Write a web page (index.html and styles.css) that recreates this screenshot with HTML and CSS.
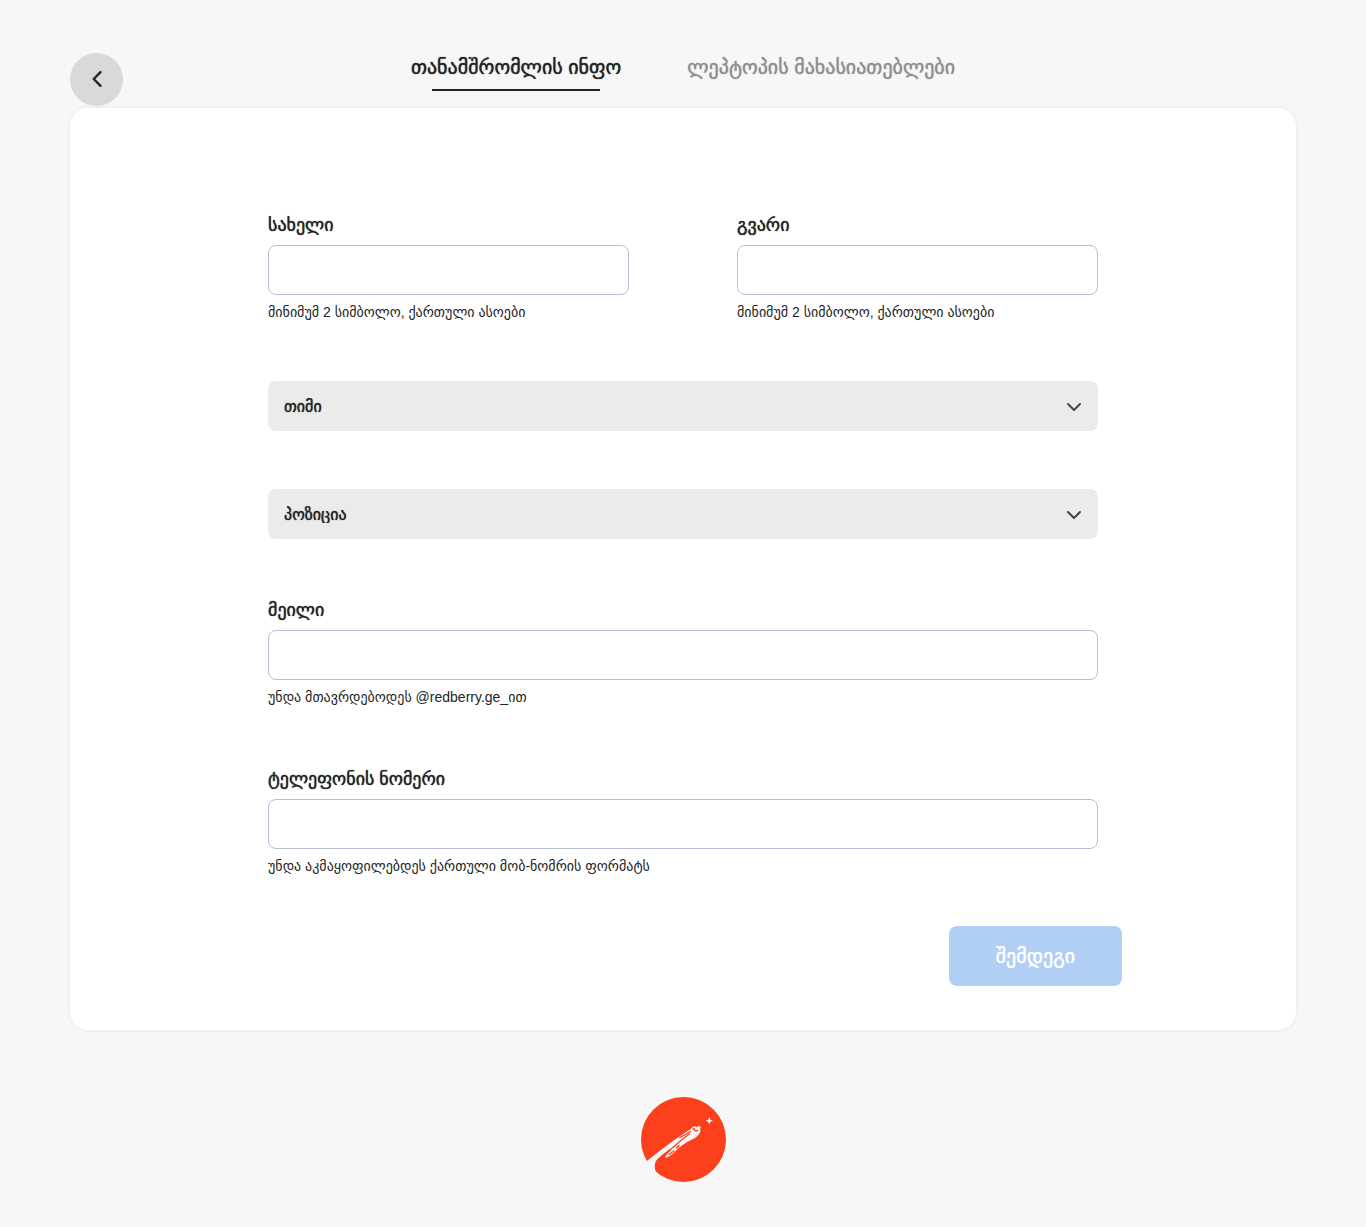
FILE: index.html
```html
<!DOCTYPE html>
<html lang="ka">
<head>
<meta charset="utf-8">
<meta name="viewport" content="width=device-width, initial-scale=1">
<title>თანამშრომლის ინფო</title>
<link rel="stylesheet" href="styles.css">
</head>
<body>
<div class="page">
  <header class="header">
    <button class="back" type="button" aria-label="უკან">
      <svg width="12" height="18" viewBox="0 0 12 18" fill="none" stroke="currentColor" stroke-width="2.4" stroke-linecap="round" stroke-linejoin="round"><path d="M9.500 2.200L2.700 9l6.800 6.800"/></svg>
    </button>
    <nav class="tabs">
      <a class="tab tab-active" href="#employee">თანამშრომლის ინფო</a>
      <a class="tab" href="#laptop">ლეპტოპის მახასიათებლები</a>
    </nav>
  </header>

  <main class="card">
    <form class="form">
      <div class="row">
        <div class="field">
          <label class="label" for="name">სახელი</label>
          <input class="input" id="name" type="text">
          <p class="hint">მინიმუმ 2 სიმბოლო, ქართული ასოები</p>
        </div>
        <div class="field">
          <label class="label" for="surname">გვარი</label>
          <input class="input" id="surname" type="text">
          <p class="hint">მინიმუმ 2 სიმბოლო, ქართული ასოები</p>
        </div>
      </div>
      <div class="picker">
        <select class="select" aria-label="თიმი"><option>თიმი</option></select>
        <svg class="chevron" width="16" height="10" viewBox="0 0 16 10" fill="none" stroke="currentColor" stroke-width="2" stroke-linecap="round" stroke-linejoin="round"><path d="M2 2l6 6 6-6"/></svg>
      </div>
      <div class="picker">
        <select class="select" aria-label="პოზიცია"><option>პოზიცია</option></select>
        <svg class="chevron" width="16" height="10" viewBox="0 0 16 10" fill="none" stroke="currentColor" stroke-width="2" stroke-linecap="round" stroke-linejoin="round"><path d="M2 2l6 6 6-6"/></svg>
      </div>
      <div class="field">
        <label class="label" for="email">მეილი</label>
        <input class="input" id="email" type="email">
        <p class="hint">უნდა მთავრდებოდეს @redberry.ge_ით</p>
      </div>
      <div class="field">
        <label class="label" for="phone">ტელეფონის ნომერი</label>
        <input class="input" id="phone" type="tel">
        <p class="hint">უნდა აკმაყოფილებდეს ქართული მობ-ნომრის ფორმატს</p>
      </div>
    </form>
    <div class="actions">
      <button class="next" type="button">შემდეგი</button>
    </div>
  </main>

  <footer class="footer">
    <svg width="86" height="86" viewBox="0 0 86 86" role="img" aria-label="Redberry">
      <circle cx="43.500" cy="43.500" r="42.500" fill="#fc3f1d"/>
      <path fill="#f7f7f7" d="M0 70L7 65C22 53 36 42.500 47.500 35C50 34 51 32.500 53 31C55 29.500 57 30.500 57 31.500C57.500 30 60 29.500 60.500 31C61 32.500 59.500 33 60.500 34.500C60 37.500 57.500 40 55 42L47 46L39 51.500C35 56 31 60 25.500 62C25 60 27.500 57.500 30 55.500L34 50C28 54 22 59 17.500 63C14.500 66 14 71 16 76L0 80Z"/>
      <path fill="none" stroke="#fc3f1d" stroke-width="1.400" stroke-linecap="round" d="M33 51.500C39 46 44 41.500 49.500 38M29 58.500L34 55M36.500 52L39 49.500M40 41.500L50.500 35.500M53 33C56 31.500 53 36 57.500 34.500"/>
      <path fill="#fff" d="M69.300 21l1 2.700 2.700 1-2.700 1-1 2.700-1-2.700-2.700-1 2.700-1z"/>
    </svg>
  </footer>
</div>
</body>
</html>
```
FILE: styles.css
```css
*, *::before, *::after { box-sizing: border-box; }
body {
  margin: 0;
  background: #f7f7f7;
  color: #232323;
  font-family: "Liberation Sans", "DejaVu Sans", sans-serif;
}
button, input, select { font: inherit; color: inherit; }
.page { padding: 0 70px; }

.header {
  display: grid;
  grid-template-columns: 1fr auto 1fr;
  align-items: start;
  padding: 53px 0 2px;
}
.back {
  display: grid;
  place-items: center;
  width: 53px;
  height: 53px;
  padding: 0 0 2px;
  border: 0;
  border-radius: 50%;
  background: #d9d9d9;
}
.tabs { display: flex; gap: 66px; }
.tab {
  display: flex;
  flex-direction: column;
  align-items: center;
  color: #8f8f8f;
  font-size: 20px;
  line-height: 28px;
  text-decoration: none;
}
.tab-active { color: #232323; }
.tab-active::after {
  content: "";
  width: 80%;
  height: 2px;
  margin-top: 8px;
  background: #232323;
}
/* The Georgian face has no medium weight, so the strokes are thickened. */
.tab, .label, .select, .next { text-shadow: 0 0 1px currentColor; }

.card {
  padding: 104px 24px 44px;
  border-radius: 18px;
  background: #fff;
  box-shadow: 0 0 4px rgba(0, 0, 0, 0.08);
}
.form {
  display: grid;
  gap: 56px;
  max-width: 830px;
  margin: 0 auto;
}
.row { display: grid; grid-template-columns: 1fr 1fr; gap: 108px; }
.field { display: grid; gap: 6px; }
.label { font-size: 18px; line-height: 27px; }
.input {
  width: 100%;
  height: 50px;
  padding: 0 16px;
  border: 1px solid #b7bdd4;
  border-radius: 8px;
  background: #fff;
}
.hint { margin: 0; padding-bottom: 2px; font-size: 14px; line-height: 22px; }
.picker { position: relative; padding-bottom: 2px; }
.select {
  display: block;
  width: 100%;
  height: 50px;
  padding: 0 16px;
  border: 0;
  border-radius: 8px;
  background: #ebebeb;
  font-size: 16px;
  appearance: none;
}
.chevron {
  position: absolute;
  top: 21px;
  right: 16px;
  color: #444;
  pointer-events: none;
}
.actions {
  display: flex;
  justify-content: flex-end;
  max-width: 878px;
  margin: 47px auto 0;
}
.next {
  width: 173px;
  height: 60px;
  padding: 0;
  border: 0;
  border-radius: 8px;
  background: #b1cff5;
  color: #fff;
  font-size: 20px;
}
.footer { display: flex; justify-content: center; padding: 66px 0 45px; }
.footer svg { display: block; }
```
